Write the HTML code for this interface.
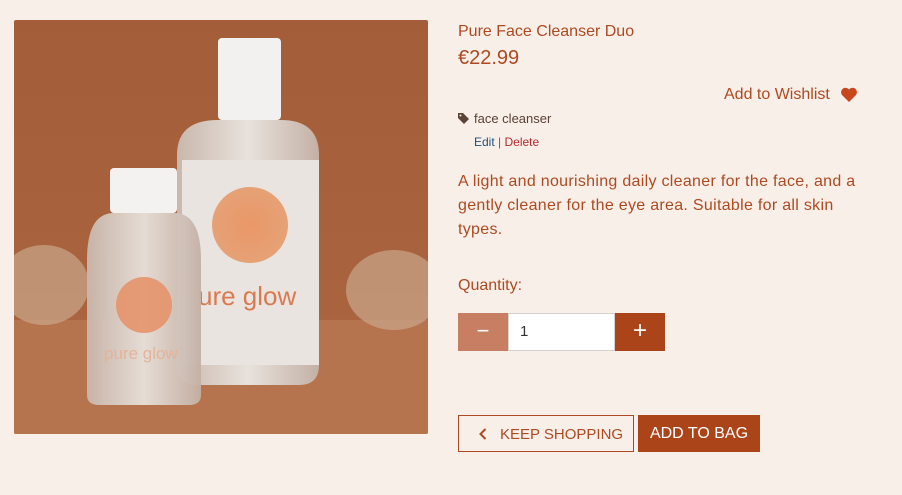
<!DOCTYPE html>
<html><head><meta charset="utf-8"><style>
body{margin:0;width:902px;height:495px;background:#f8efe8;font-family:"Liberation Sans",sans-serif;position:relative;overflow:hidden}
.a{position:absolute;white-space:nowrap}
.c{color:#ad4a22}
</style></head><body>
<svg class="a" style="left:14px;top:20px;border-radius:2px" width="414" height="414" viewBox="0 0 414 414">
<defs>
<linearGradient id="bg" x1="0" y1="0" x2="0" y2="1"><stop offset="0" stop-color="#a35d39"/><stop offset="0.7" stop-color="#a9643f"/><stop offset="1" stop-color="#b06f4a"/></linearGradient>
<linearGradient id="gl" x1="0" y1="0" x2="1" y2="0"><stop offset="0" stop-color="#c9b7ac"/><stop offset="0.5" stop-color="#e8e2dc"/><stop offset="1" stop-color="#c4b0a5"/></linearGradient>
<radialGradient id="lg" cx="0.5" cy="0.5" r="0.5"><stop offset="0" stop-color="#ea8f5a"/><stop offset="1" stop-color="#e59a6a"/></radialGradient>
</defs>
<rect width="414" height="414" fill="url(#bg)"/>
<rect y="300" width="414" height="114" fill="#b5744e"/>
<ellipse cx="30" cy="265" rx="45" ry="40" fill="#c9a68a" opacity="0.7"/>
<ellipse cx="380" cy="270" rx="48" ry="40" fill="#c9a68a" opacity="0.7"/>
<path d="M163 135 Q163 100 204 100 L267 100 Q305 100 305 135 L305 345 Q305 365 285 365 L183 365 Q163 365 163 345Z" fill="url(#gl)"/>
<rect x="168" y="140" width="137" height="205" fill="#e9e4e0"/>
<rect x="204" y="18" width="63" height="82" rx="4" fill="#f3f1ef"/>
<circle cx="236" cy="205" r="38" fill="url(#lg)" opacity="0.9"/>
<text x="184" y="285" font-family="Liberation Sans" font-size="26" fill="#d97a4f">ure glow</text>
<path d="M73 240 Q73 193 100 193 L160 193 Q187 193 187 240 L187 375 Q187 385 175 385 L85 385 Q73 385 73 375Z" fill="url(#gl)" opacity="0.95"/>
<rect x="96" y="148" width="67" height="45" rx="4" fill="#f4f2f0"/>
<circle cx="130" cy="285" r="28" fill="#e4936a" opacity="0.9"/>
<text x="90" y="339" font-family="Liberation Sans" font-size="17" fill="#e2b49b">pure glow</text>
</svg>
<div class="a c" style="left:458px;top:23px;font-size:16px">Pure Face Cleanser Duo</div>
<div class="a c" style="left:458px;top:47px;font-size:20px">€22.99</div>
<div class="a c" style="left:724px;top:86px;font-size:16px">Add to Wishlist</div>
<svg class="a" style="left:840px;top:87px" width="18" height="16" viewBox="0 0 18 16"><path d="M9 15 L2 8 A4.2 4.2 0 0 1 9 2.5 A4.2 4.2 0 0 1 16 8Z" fill="#c8461c"/></svg>
<svg class="a" style="left:458px;top:113px" width="11" height="11" viewBox="0 0 11 11"><path d="M0 0H5L11 6L6 11L0 5Z" fill="#5c4438"/><circle cx="2.5" cy="2.5" r="1" fill="#f8efe8"/></svg>
<div class="a" style="left:474px;top:111px;font-size:13px;color:#5a4036">face cleanser</div>
<div class="a" style="left:474px;top:135px;font-size:12px"><span style="color:#22507a">Edit</span> <span style="color:#ad4a22">|</span> <span style="color:#b5282a">Delete</span></div>
<div class="a c" style="left:458px;top:170px;font-size:16px;line-height:24px;white-space:normal;width:404px;letter-spacing:0.3px">A light and nourishing daily cleaner for the face, and a gently cleaner for the eye area. Suitable for all skin types.</div>
<div class="a c" style="left:458px;top:277px;font-size:16px">Quantity:</div>
<div class="a" style="left:458px;top:313px;width:50px;height:38px;background:#c77e62;color:#fff;font-size:22px;text-align:center;line-height:36px">−</div>
<div class="a" style="left:508px;top:313px;width:105px;height:36px;border:1px solid #d6d0cc;background:#fff;font-size:15px;line-height:36px;color:#333"><span style="padding-left:11px">1</span></div>
<div class="a" style="left:615px;top:313px;width:50px;height:38px;background:#ac4419;color:#fff;font-size:24px;text-align:center;line-height:36px">+</div>
<div class="a c" style="left:458px;top:415px;width:174px;height:35px;border:1px solid #ad4a22;font-size:15px;line-height:37px">
<svg style="position:absolute;left:20px;top:12px" width="8" height="12" viewBox="0 0 8 12"><path d="M6.5 1L1.5 6L6.5 11" stroke="#ad4a22" stroke-width="2" fill="none"/></svg>
<span style="position:absolute;left:41px">KEEP SHOPPING</span></div>
<div class="a" style="left:638px;top:415px;width:122px;height:37px;background:#ac4419;color:#fff;font-size:16px;line-height:37px;text-align:center">ADD TO BAG</div>
</body></html>
